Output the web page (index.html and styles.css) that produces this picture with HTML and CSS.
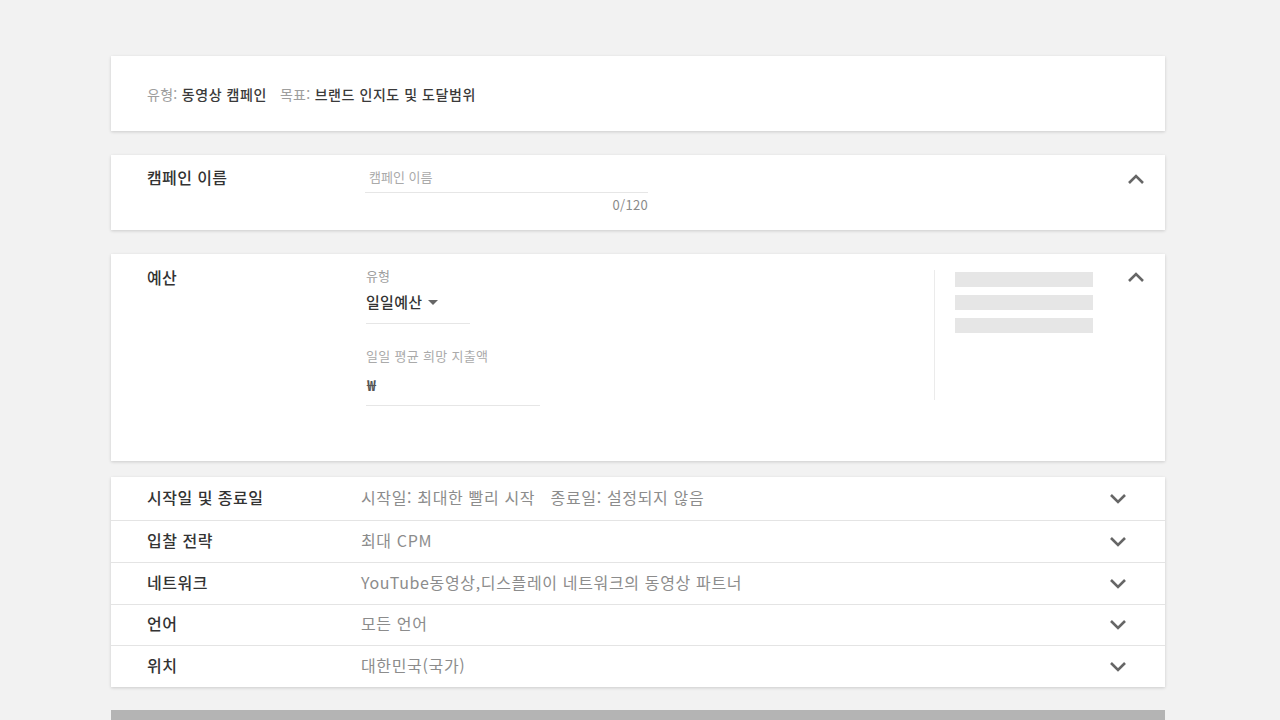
FILE: index.html
```html
<!DOCTYPE html>
<html lang="ko">
<head>
<meta charset="utf-8">
<link rel="stylesheet" href="styles.css">
</head>
<body>
<div class="page">
  <div class="card summary">
    <div class="summary-text"><span class="k">유형:</span> <span class="v">동영상 캠페인</span><span class="k gap">목표:</span> <span class="v">브랜드 인지도 및 도달범위</span></div>
  </div>

  <div class="card name-card">
    <div class="title">캠페인 이름</div>
    <div class="field-wrap">
      <div class="name-input">캠페인 이름</div>
      <div class="counter">0/120</div>
    </div>
    <div class="chev-up"><svg width="18" height="12" viewBox="0 0 18 12"><path d="M2 10 L9 3 L16 10" fill="none" stroke="#666" stroke-width="2.6"/></svg></div>
  </div>

  <div class="card budget-card">
    <div class="title">예산</div>
    <div class="budget-fields">
      <div class="small-label">유형</div>
      <div class="select">일일예산 <svg class="caret" width="10" height="6" viewBox="0 0 10 6"><path d="M0 0 L10 0 L5 5 Z" fill="#666"/></svg></div>
      <div class="small-label second">일일 평균 희망 지출액</div>
      <div class="amount">₩</div>
    </div>
    <div class="side">
      <div class="bar"></div>
      <div class="bar"></div>
      <div class="bar"></div>
    </div>
    <div class="chev-up budget-chev"><svg width="18" height="12" viewBox="0 0 18 12"><path d="M2 10 L9 3 L16 10" fill="none" stroke="#666" stroke-width="2.6"/></svg></div>
  </div>

  <div class="card rows">
    <div class="row"><div class="rl">시작일 및 종료일</div><div class="rv">시작일: 최대한 빨리 시작&nbsp;&nbsp;&nbsp;종료일: 설정되지 않음</div><div class="chev-down"><svg width="18" height="12" viewBox="0 0 18 12"><path d="M2 3 L9 10 L16 3" fill="none" stroke="#666" stroke-width="2.6"/></svg></div></div>
    <div class="row"><div class="rl">입찰 전략</div><div class="rv">최대 CPM</div><div class="chev-down"><svg width="18" height="12" viewBox="0 0 18 12"><path d="M2 3 L9 10 L16 3" fill="none" stroke="#666" stroke-width="2.6"/></svg></div></div>
    <div class="row"><div class="rl">네트워크</div><div class="rv">YouTube동영상,디스플레이 네트워크의 동영상 파트너</div><div class="chev-down"><svg width="18" height="12" viewBox="0 0 18 12"><path d="M2 3 L9 10 L16 3" fill="none" stroke="#666" stroke-width="2.6"/></svg></div></div>
    <div class="row"><div class="rl">언어</div><div class="rv">모든 언어</div><div class="chev-down"><svg width="18" height="12" viewBox="0 0 18 12"><path d="M2 3 L9 10 L16 3" fill="none" stroke="#666" stroke-width="2.6"/></svg></div></div>
    <div class="row"><div class="rl">위치</div><div class="rv">대한민국(국가)</div><div class="chev-down"><svg width="18" height="12" viewBox="0 0 18 12"><path d="M2 3 L9 10 L16 3" fill="none" stroke="#666" stroke-width="2.6"/></svg></div></div>
  </div>

  <div class="footer-bar"></div>
</div>
</body>
</html>
```

FILE: styles.css
```css
html, body {
  margin: 0;
  padding: 0;
  background: #f2f2f2;
  font-family: "Noto Sans CJK KR", "Noto Sans", sans-serif;
  color: #333;
  overflow: hidden;
}
.page {
  width: 1054px;
  margin-left: 111px;
  padding-top: 56px;
  display: flex;
  flex-direction: column;
}
.card {
  background: #fff;
  box-shadow: 0 1px 3px rgba(0,0,0,0.16);
}
.summary {
  height: 75px;
  box-sizing: border-box;
  padding-left: 36px;
  display: flex;
  align-items: center;
  font-size: 14px;
  letter-spacing: 0.3px;
}
.summary .k { color: #9e9e9e; }
.summary .v { color: #3a3a3a; font-weight: 500; letter-spacing: 0.55px; }
.summary .gap { margin-left: 13px; }

.name-card {
  margin-top: 24px;
  height: 75px;
  box-sizing: border-box;
  display: flex;
  position: relative;
}
.title {
  width: 218px;
  padding-left: 36px;
  font-size: 16px;
  font-weight: 500;
  color: #333;
  padding-top: 10px;
  line-height: 24px;
  letter-spacing: 0.4px;
}
.field-wrap {
  width: 283px;
  padding-top: 12px;
}
.name-input {
  font-size: 13px;
  color: #aaa;
  line-height: 20px;
  padding-left: 4px;
  padding-bottom: 5px;
  border-bottom: 1px solid #e6e6e6;
}
.counter {
  text-align: right;
  font-size: 13px;
  color: #8a8a8a;
  line-height: 20px;
  margin-top: 2px;
  letter-spacing: 0.3px;
}
.chev-up {
  position: absolute;
  right: 20px;
  top: 18px;
  line-height: 0;
}

.budget-card {
  margin-top: 24px;
  height: 207px;
  display: flex;
  position: relative;
}
.budget-card .title { padding-top: 11px; width: 219px; }
.budget-fields {
  width: 568px;
  padding-top: 12px;
}
.small-label {
  font-size: 13px;
  color: #9e9e9e;
  line-height: 20px;
}
.small-label.second {
  margin-top: 22px;
  color: #aaa;
  letter-spacing: 0.3px;
}
.select {
  width: 104px;
  margin-top: 4px;
  font-size: 15px;
  font-weight: 500;
  color: #333;
  line-height: 24px;
  padding-bottom: 9px;
  border-bottom: 1px solid #e6e6e6;
  display: flex;
  align-items: center;
  gap: 6px;
  letter-spacing: 0.3px;
}
.select .caret { margin-top: 1px; }
.amount {
  width: 173px;
  margin-top: 8px;
  font-size: 15px;
  font-weight: 700;
  color: #555;
  line-height: 22px;
  padding-bottom: 9px;
  border-bottom: 1px solid #e6e6e6;
  padding-left: 1px;
}
.side {
  margin-top: 16px;
  height: 130px;
  border-left: 1px solid #ebebeb;
  padding-left: 20px;
  display: flex;
  flex-direction: column;
  gap: 8px;
}
.bar {
  width: 138px;
  height: 15px;
  background: #e6e6e6;
  margin-top: 2px;
}
.bar + .bar { margin-top: 0; }
.budget-chev { top: 17px; }

.rows {
  margin-top: 16px;
  display: flex;
  flex-direction: column;
}
.row {
  height: 41.75px;
  box-sizing: border-box;
  display: flex;
  align-items: center;
  border-top: 1px solid #e4e4e4;
  padding-bottom: 3px;
}
.row:first-child { border-top: none; height: 43px; }
.rl {
  width: 214px;
  padding-left: 36px;
  font-size: 16px;
  font-weight: 500;
  color: #333;
  letter-spacing: 0.5px;
}
.rv {
  flex: 1;
  font-size: 16px;
  color: #8c8c8c;
  letter-spacing: 0.65px;
}
.chev-down {
  width: 18px;
  margin-right: 38px;
  line-height: 0;
  margin-top: 2px;
}

.footer-bar {
  margin-top: 23px;
  height: 20px;
  background: #b4b4b4;
}
```
